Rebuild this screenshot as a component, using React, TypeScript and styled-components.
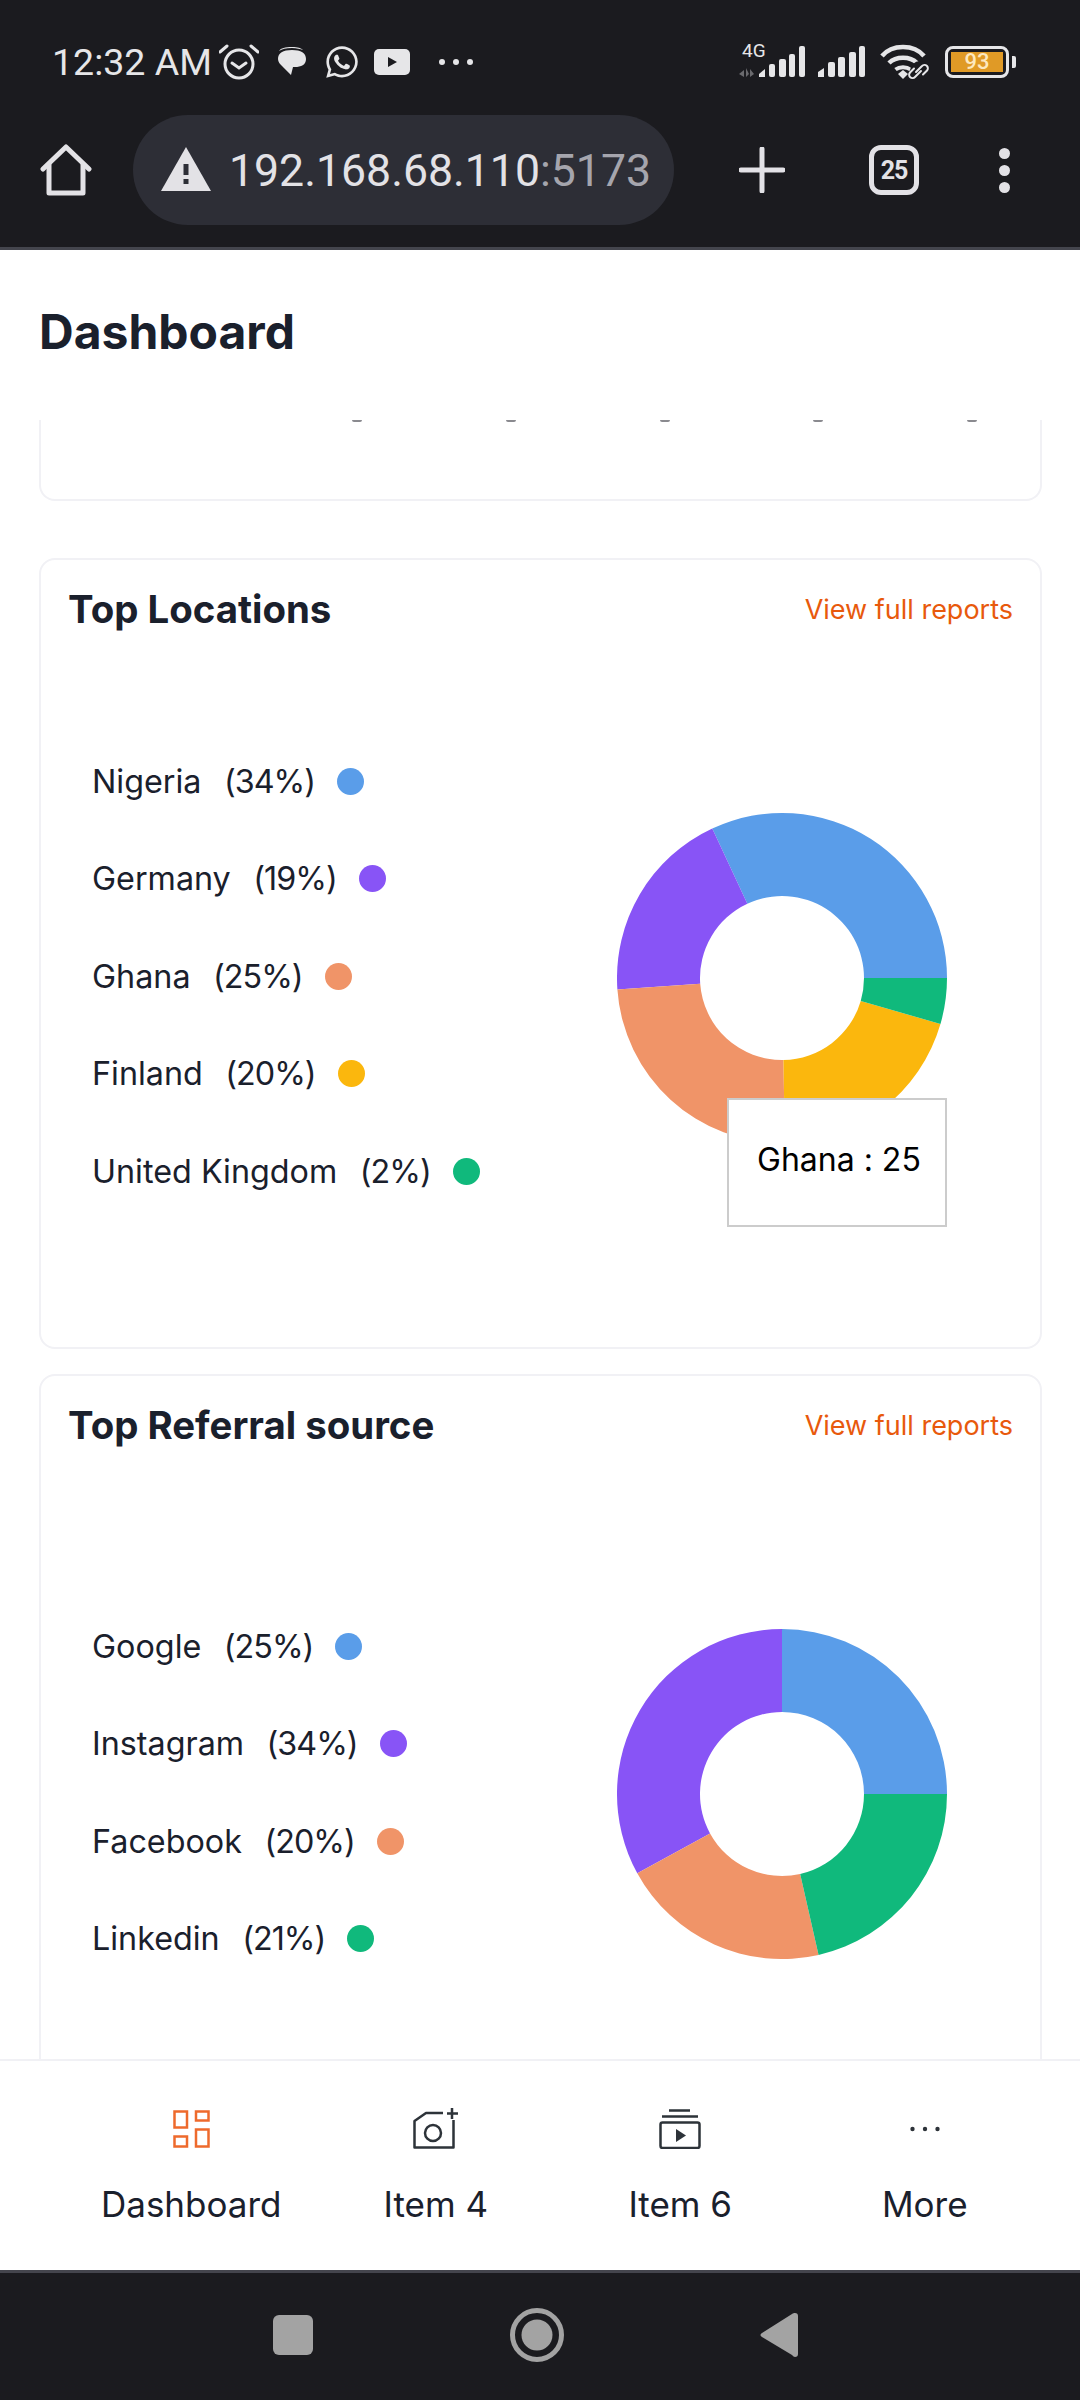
import React from "react";
import styled, { createGlobalStyle } from "styled-components";
import { FaWhatsapp } from "react-icons/fa";

const GlobalStyle = createGlobalStyle`
  html, body {
    margin: 0;
    padding: 0;
    background: #fff;
  }
  * {
    box-sizing: border-box;
  }
`;

type Slice = { label: string; percent: string; color: string; to: number };

const BLUE = "#5a9de9";
const PURPLE = "#8854f6";
const ORANGE = "#f09468";
const YELLOW = "#fbb70d";
const GREEN = "#10b97c";

// "to" is the angle where the slice ends, counter clockwise from 3 o'clock
const locations: Slice[] = [
  { label: "Nigeria", percent: "(34%)", color: BLUE, to: 115 },
  { label: "Germany", percent: "(19%)", color: PURPLE, to: 184 },
  { label: "Ghana", percent: "(25%)", color: ORANGE, to: 271 },
  { label: "Finland", percent: "(20%)", color: YELLOW, to: 343.8 },
  { label: "United Kingdom", percent: "(2%)", color: GREEN, to: 360 },
];

const referrals: Slice[] = [
  { label: "Google", percent: "(25%)", color: BLUE, to: 90 },
  { label: "Instagram", percent: "(34%)", color: PURPLE, to: 208.7 },
  { label: "Facebook", percent: "(20%)", color: ORANGE, to: 282.8 },
  { label: "Linkedin", percent: "(21%)", color: GREEN, to: 360 },
];

const slicePath = (from: number, to: number) => {
  const outer = 165;
  const inner = 82;
  const c = 165;
  const pt = (r: number, a: number) => {
    const rad = (a * Math.PI) / 180;
    return `${(c + r * Math.cos(rad)).toFixed(2)} ${(c - r * Math.sin(rad)).toFixed(2)}`;
  };
  const large = to - from > 180 ? 1 : 0;
  return `M${pt(outer, from)} A${outer} ${outer} 0 ${large} 0 ${pt(outer, to)} L${pt(inner, to)} A${inner} ${inner} 0 ${large} 1 ${pt(inner, from)} Z`;
};

const Page = styled.div`
  width: 1080px;
  height: 2400px;
  display: flex;
  flex-direction: column;
  overflow: hidden;
  background: #fff;
  font-family: Inter, "Noto Sans", sans-serif;
  font-feature-settings: "calt" 0;
  color: #1a202c;
`;

const TopChrome = styled.div`
  height: 250px;
  flex: none;
  background: #1b1b1f;
  border-bottom: 3px solid #44454d;
`;

const StatusBar = styled.div`
  height: 115px;
  padding: 9px 64px 0 52px;
  display: flex;
  align-items: center;
  justify-content: space-between;
  color: #e6e6e8;
`;

const StatusGroup = styled.div`
  display: flex;
  align-items: center;
`;

const Clock = styled.span`
  font-family: Roboto, sans-serif;
  font-size: 37.5px;
  width: 167px;
  white-space: nowrap;
`;

const StatusSlot = styled.span<{ $w: number; $ml?: number }>`
  display: flex;
  align-items: center;
  justify-content: center;
  width: ${(p) => p.$w}px;
  margin-left: ${(p) => p.$ml ?? 0}px;
`;

const Network = styled.span`
  position: relative;
  display: block;
  width: 66px;
  height: 32px;
`;

const FourG = styled.span`
  position: absolute;
  left: 3px;
  top: -4px;
  font-family: Roboto, sans-serif;
  font-size: 19px;
  line-height: 18px;
  color: #e6e6e8;
`;

const Battery = styled.span`
  width: 64px;
  height: 32px;
  border: 3px solid #e6e6e8;
  border-radius: 8px;
  padding: 3px;
  display: flex;
`;

const BatteryFill = styled.span`
  flex: 1;
  background: #e09a26;
  color: #fde8bf;
  font-family: Roboto, sans-serif;
  font-size: 22px;
  font-weight: 500;
  line-height: 20px;
  text-align: center;
`;

const BatteryTip = styled.span`
  width: 4px;
  height: 12px;
  border-radius: 0 2px 2px 0;
  background: #e6e6e8;
  margin-left: 3px;
`;

const BrowserBar = styled.div`
  height: 132px;
  display: flex;
  align-items: flex-start;
  color: #e3e2e6;
`;

const BrowserSlot = styled.div<{ $w: number; $ml: number }>`
  width: ${(p) => p.$w}px;
  margin-left: ${(p) => p.$ml}px;
  height: 110px;
  display: flex;
  align-items: center;
  justify-content: center;
`;

const UrlPill = styled.div`
  width: 541px;
  height: 110px;
  margin-left: 41px;
  padding: 0 0 2px 28px;
  border-radius: 55px;
  background: #2d2e36;
  display: flex;
  align-items: center;
  font-family: Roboto, sans-serif;
  font-size: 44.6px;
  white-space: nowrap;
`;

const UrlHost = styled.span`
  margin: 4px 0 0 18px;
  color: #e3e2e6;
`;

const UrlPort = styled.span`
  color: #a5a5ad;
`;

const TabCount = styled.div`
  width: 50px;
  height: 50px;
  border: 5px solid #e3e2e6;
  border-radius: 12px;
  display: flex;
  align-items: center;
  justify-content: center;
  font-family: Roboto, sans-serif;
  font-size: 25px;
  font-weight: 700;
  letter-spacing: -1px;
`;

const MenuDots = styled.div`
  display: flex;
  flex-direction: column;
  gap: 6px;
`;

const MenuDot = styled.span`
  width: 11px;
  height: 11px;
  border-radius: 50%;
  background: #e3e2e6;
`;

const PageHeader = styled.header`
  height: 170px;
  flex: none;
  padding: 0 39px 8px;
  display: flex;
  align-items: center;
`;

const PageTitle = styled.h1`
  margin: 0;
  font-size: 48px;
  font-weight: 700;
  color: #1a202c;
`;

const ScrollArea = styled.main`
  flex: 1;
  min-height: 0;
  overflow: hidden;
  padding: 0 38px 0 39px;
`;

const ClippedCard = styled.section`
  height: 81px;
  border: 2px solid #f1f1f5;
  border-top: none;
  border-radius: 0 0 16px 16px;
  padding: 0 63px 0 311px;
  display: flex;
  justify-content: space-between;
  align-items: flex-start;
`;

const Tick = styled.span`
  width: 10px;
  height: 2px;
  border-radius: 0 0 5px 5px;
  background: #8a8a8f;
`;

const Card = styled.section<{ $height: number; $mt: number }>`
  height: ${(p) => p.$height}px;
  margin-top: ${(p) => p.$mt}px;
  border: 2px solid #f1f1f5;
  border-radius: 16px;
  padding: 25px 27px 0;
`;

const CardHead = styled.div`
  display: flex;
  align-items: center;
  justify-content: space-between;
  height: 48px;
`;

const CardTitle = styled.h2`
  margin: 0;
  font-size: 38.4px;
  font-weight: 700;
  color: #1a202c;
`;

const ReportLink = styled.a`
  font-size: 27px;
  color: #e8590c;
`;

const CardBody = styled.div<{ $mt: number }>`
  margin-top: ${(p) => p.$mt}px;
  padding: 0 66px 0 24px;
  display: flex;
  align-items: center;
  justify-content: space-between;
`;

const Legend = styled.ul`
  list-style: none;
  margin: 0;
  padding: 0 0 3px;
  display: flex;
  flex-direction: column;
  gap: 49.5px;
`;

const LegendRow = styled.li`
  height: 48px;
  display: flex;
  align-items: center;
  font-size: 32.3px;
  color: #1a202c;
`;

const LegendPercent = styled.span`
  margin-left: 22.5px;
  letter-spacing: -1px;
`;

const LegendDot = styled.span<{ $color: string }>`
  width: 27px;
  height: 27px;
  margin-left: 22px;
  border-radius: 50%;
  background: ${(p) => p.$color};
`;

const Chart = styled.div`
  position: relative;
  width: 330px;
  height: 330px;
  flex: none;
`;

const Tooltip = styled.div`
  position: absolute;
  left: 110px;
  top: 285px;
  width: 220px;
  height: 129px;
  padding: 40px 28px 0;
  background: #fff;
  border: 2px solid #ccc;
  font-size: 32px;
  line-height: 40px;
  color: #000;
  white-space: nowrap;
`;

const BottomNav = styled.nav`
  height: 211px;
  flex: none;
  background: #fff;
  border-top: 2px solid #f1f1f5;
  padding: 0 33px 0 69px;
  display: grid;
  grid-template-columns: repeat(4, 1fr);
`;

const NavItem = styled.div`
  display: flex;
  flex-direction: column;
  align-items: center;
  padding-top: 44px;
`;

const NavIcon = styled.div`
  width: 48px;
  height: 48px;
  display: flex;
  align-items: center;
  justify-content: center;
`;

const NavLabel = styled.span`
  margin-top: 29px;
  font-size: 35px;
  line-height: 44px;
  color: #1a202c;
`;

const AndroidNav = styled.div`
  height: 130px;
  flex: none;
  background: #1b1b1f;
  border-top: 3px solid #44454d;
  padding: 0 282px 3px 273px;
  display: flex;
  align-items: center;
  justify-content: space-between;
`;

const Donut = ({ data }: { data: Slice[] }) => {
  let from = 0;
  return (
    <svg width="330" height="330" viewBox="0 0 330 330">
      {data.map((s) => {
        const d = slicePath(from, s.to);
        from = s.to;
        return <path key={s.label} d={d} fill={s.color} />;
      })}
    </svg>
  );
};

const LegendList = ({ data }: { data: Slice[] }) => (
  <Legend>
    {data.map((s) => (
      <LegendRow key={s.label}>
        <span>{s.label}</span>
        <LegendPercent>{s.percent}</LegendPercent>
        <LegendDot $color={s.color} />
      </LegendRow>
    ))}
  </Legend>
);

const Bars = () => (
  <svg width="48" height="32" viewBox="0 0 48 32" fill="#e6e6e8">
    <path d="M0 31v-5l6-4v9z" />
    <rect x="10" y="16" width="7" height="15" rx="2" />
    <rect x="20" y="11" width="7" height="20" rx="2" />
    <rect x="31" y="6" width="7" height="25" rx="2" />
    <rect x="41" y="0" width="6" height="31" rx="2" />
  </svg>
);

const App: React.FC = () => {
  return (
    <Page>
      <GlobalStyle />
      <TopChrome>
        <StatusBar>
          <StatusGroup>
            <Clock>12:32 AM</Clock>
            <svg width="40" height="38" viewBox="0 0 40 38" fill="none" stroke="#e6e6e8" strokeWidth="3">
              <circle cx="20" cy="21" r="14" />
              <path d="M13 20l7 5 7-5" strokeLinecap="round" />
              <path d="M1 9l7-6M39 9l-7-6" strokeLinecap="round" />
            </svg>
            <StatusSlot $w={30} $ml={18}>
              <svg width="30" height="30" viewBox="0 0 30 30" fill="#e6e6e8">
                <path d="M2 4c2-3 6-4 13-4 6 0 9 1 11 3-3-1-6-2-11-2C9 1 5 2 2 4z" />
                <path d="M1 12c0-6 5-9 14-9s14 3 14 9c0 6-5 8-11 8h-2l-2 8-9-9c-2-2-4-4-4-7z" />
              </svg>
            </StatusSlot>
            <StatusSlot $w={36} $ml={17}>
              <FaWhatsapp size={36} color="#e6e6e8" />
            </StatusSlot>
            <StatusSlot $w={36} $ml={14}>
              <svg width="36" height="26" viewBox="0 0 36 26">
                <rect width="36" height="26" rx="5" fill="#e6e6e8" />
                <path d="M14 8l9 5-9 5z" fill="#1b1b1f" />
              </svg>
            </StatusSlot>
            <StatusSlot $w={36} $ml={28}>
              <svg width="36" height="8" viewBox="0 0 36 8" fill="#e6e6e8">
                <circle cx="4" cy="4" r="3" />
                <circle cx="18" cy="4" r="3" />
                <circle cx="32" cy="4" r="3" />
              </svg>
            </StatusSlot>
          </StatusGroup>
          <StatusGroup>
            <Network>
              <FourG>4G</FourG>
              <svg width="66" height="32" viewBox="0 0 66 32">
                <path d="M5 24l-5 4 5 3zM7 22v9l3-3-3-6zM11 23v8l4-3z" fill="#6a6a6e" />
                <g fill="#e6e6e8">
                  <path d="M20 31v-3l6-5v8z" />
                  <rect x="30" y="18" width="6" height="13" rx="2" />
                  <rect x="40" y="13" width="7" height="18" rx="2" />
                  <rect x="50" y="8" width="6" height="23" rx="2" />
                  <rect x="60" y="0" width="6" height="31" rx="2" />
                </g>
              </svg>
            </Network>
            <StatusSlot $w={48} $ml={13}>
              <Bars />
            </StatusSlot>
            <StatusSlot $w={50} $ml={14}>
              <svg width="50" height="36" viewBox="0 0 50 36" fill="none" stroke="#e6e6e8">
                <path d="M2 12C12 0 34 0 44 12" strokeWidth="4.5" />
                <path d="M9 19c7-7 21-7 28 0" strokeWidth="4.5" />
                <path d="M15.500 25.500c4-3 11-3 15 0" strokeWidth="4" />
                <path d="M18 30l5-4 5 4-5 5z" fill="#e6e6e8" stroke="none" />
                <circle cx="40" cy="27" r="10" fill="#1b1b1f" stroke="none" />
                <path d="M36 28l6-6a3.200 3.200 0 0 1 5 4.500l-4 4M41 27l-6 6a3.200 3.200 0 0 1-5-4.500l4-4" strokeWidth="2" strokeLinecap="round" />
              </svg>
            </StatusSlot>
            <StatusSlot $w={64} $ml={15}>
              <Battery>
                <BatteryFill>93</BatteryFill>
              </Battery>
            </StatusSlot>
            <BatteryTip />
          </StatusGroup>
        </StatusBar>
        <BrowserBar>
          <BrowserSlot $w={52} $ml={40}>
            <svg width="52" height="52" viewBox="0 0 52 52" fill="none" stroke="#e3e2e6" strokeWidth="5" strokeLinejoin="round" strokeLinecap="round">
              <path d="M3 25L26 3l23 22" />
              <path d="M9 21v28h34V21" />
            </svg>
          </BrowserSlot>
          <UrlPill>
            <svg width="50" height="44" viewBox="0 0 50 44">
              <path d="M25 0l25 44H0z" fill="#e3e2e6" />
              <path d="M22.500 17h5v11h-5zM22.500 32h5v5h-5z" fill="#2d2e36" />
            </svg>
            <UrlHost>
              192.168.68.110<UrlPort>:5173</UrlPort>
            </UrlHost>
          </UrlPill>
          <BrowserSlot $w={46} $ml={65}>
            <svg width="46" height="46" viewBox="0 0 46 46" stroke="#e3e2e6" strokeWidth="5" strokeLinecap="round">
              <path d="M23 2v42M2 23h42" />
            </svg>
          </BrowserSlot>
          <BrowserSlot $w={50} $ml={84}>
            <TabCount>25</TabCount>
          </BrowserSlot>
          <BrowserSlot $w={11} $ml={80}>
            <MenuDots>
              <MenuDot />
              <MenuDot />
              <MenuDot />
            </MenuDots>
          </BrowserSlot>
        </BrowserBar>
      </TopChrome>

      <PageHeader>
        <PageTitle>Dashboard</PageTitle>
      </PageHeader>

      <ScrollArea>
        <ClippedCard>
          <Tick />
          <Tick />
          <Tick />
          <Tick />
          <Tick />
        </ClippedCard>

        <Card $height={791} $mt={57}>
          <CardHead>
            <CardTitle>Top Locations</CardTitle>
            <ReportLink>View full reports</ReportLink>
          </CardHead>
          <CardBody $mt={124}>
            <LegendList data={locations} />
            <Chart>
              <Donut data={locations} />
              <Tooltip>Ghana : 25</Tooltip>
            </Chart>
          </CardBody>
        </Card>

        <Card $height={900} $mt={25}>
          <CardHead>
            <CardTitle>Top Referral source</CardTitle>
            <ReportLink>View full reports</ReportLink>
          </CardHead>
          <CardBody $mt={173}>
            <LegendList data={referrals} />
            <Chart>
              <Donut data={referrals} />
            </Chart>
          </CardBody>
        </Card>
      </ScrollArea>

      <BottomNav>
        <NavItem>
          <NavIcon>
            <svg width="37" height="38" viewBox="0 0 37 38" fill="none" stroke="#ee6a2c" strokeWidth="2.5">
              <rect x="1.500" y="1.500" width="12.500" height="16" />
              <rect x="23" y="1.500" width="12.500" height="9" />
              <rect x="1.500" y="26.500" width="12.500" height="10" />
              <rect x="23" y="19.500" width="12.500" height="17" />
            </svg>
          </NavIcon>
          <NavLabel>Dashboard</NavLabel>
        </NavItem>
        <NavItem>
          <NavIcon>
            <svg width="46" height="42" viewBox="0 0 46 42" fill="none" stroke="#2d3339" strokeWidth="2.5">
              <path d="M30 5H13L1.500 13v26.500h39V12" strokeLinejoin="round" />
              <circle cx="20" cy="25" r="8" />
              <path d="M39 0v11M34 5.500h11" />
            </svg>
          </NavIcon>
          <NavLabel>Item 4</NavLabel>
        </NavItem>
        <NavItem>
          <NavIcon>
            <svg width="42" height="40" viewBox="0 0 42 40" fill="none" stroke="#2d3339" strokeWidth="2.5">
              <path d="M10 1.500h21M3 7.500h36" />
              <rect x="1.500" y="13.500" width="39" height="25.500" rx="2" />
              <path d="M17 20l10 6.500-10 6.500z" fill="#2d3339" stroke="none" />
            </svg>
          </NavIcon>
          <NavLabel>Item 6</NavLabel>
        </NavItem>
        <NavItem>
          <NavIcon>
            <svg width="30" height="6" viewBox="0 0 30 6" fill="#2d3339">
              <circle cx="2.500" cy="3" r="2.200" />
              <circle cx="15" cy="3" r="2.200" />
              <circle cx="27.500" cy="3" r="2.200" />
            </svg>
          </NavIcon>
          <NavLabel>More</NavLabel>
        </NavItem>
      </BottomNav>

      <AndroidNav>
        <svg width="40" height="40" viewBox="0 0 40 40">
          <rect width="40" height="40" rx="6" fill="#a3a3a3" />
        </svg>
        <svg width="54" height="54" viewBox="0 0 54 54">
          <circle cx="27" cy="27" r="24.500" fill="none" stroke="#a3a3a3" strokeWidth="5" />
          <circle cx="27" cy="27" r="15.500" fill="#a3a3a3" />
        </svg>
        <svg width="38" height="46" viewBox="0 0 38 46">
          <path d="M35 1c2 0 3 1 3 3v38c0 2-1 3-3 3-1 0-2-1-3-2L2 25c-2-1-2-3 0-4L32 2c1-1 2-1 3-1z" fill="#a3a3a3" />
        </svg>
      </AndroidNav>
    </Page>
  );
};

export default App;
